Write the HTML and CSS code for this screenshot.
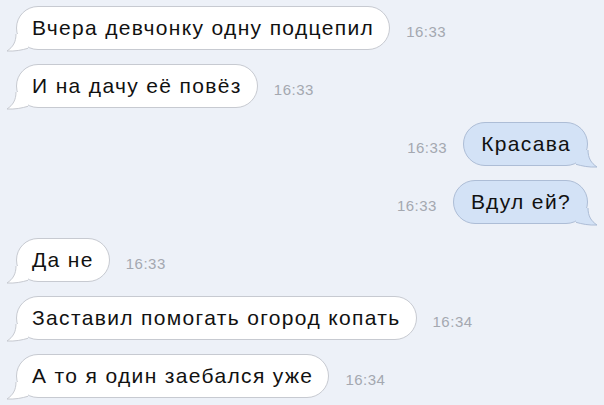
FILE: index.html
```html
<!DOCTYPE html>
<html lang="ru">
<head>
<meta charset="utf-8">
<title>Chat</title>
<link rel="stylesheet" href="styles.css">
</head>
<body>
<div class="chat">
  <div class="msg in">
    <div class="bubble">Вчера девчонку одну подцепил<svg class="tail" viewBox="0 0 26 18" width="26" height="18"><path class="tf" d="M10 0 C10 8 7 13 1 17 C9 17.5 16 16 22 14.3 L22 0 Z"/><path class="ts" d="M10 0 C10 8 7 13 1 17 C9 17.5 16 16 22 14.3"/></svg></div>
    <span class="time">16:33</span>
  </div>
  <div class="msg in">
    <div class="bubble">И на дачу её повёз<svg class="tail" viewBox="0 0 26 18" width="26" height="18"><path class="tf" d="M10 0 C10 8 7 13 1 17 C9 17.5 16 16 22 14.3 L22 0 Z"/><path class="ts" d="M10 0 C10 8 7 13 1 17 C9 17.5 16 16 22 14.3"/></svg></div>
    <span class="time">16:33</span>
  </div>
  <div class="msg out">
    <span class="time">16:33</span>
    <div class="bubble">Красава<svg class="tail" viewBox="0 0 26 18" width="26" height="18"><path class="tf" d="M10 0 C10 8 7 13 1 17 C9 17.5 16 16 22 14.3 L22 0 Z"/><path class="ts" d="M10 0 C10 8 7 13 1 17 C9 17.5 16 16 22 14.3"/></svg></div>
  </div>
  <div class="msg out">
    <span class="time">16:33</span>
    <div class="bubble">Вдул ей?<svg class="tail" viewBox="0 0 26 18" width="26" height="18"><path class="tf" d="M10 0 C10 8 7 13 1 17 C9 17.5 16 16 22 14.3 L22 0 Z"/><path class="ts" d="M10 0 C10 8 7 13 1 17 C9 17.5 16 16 22 14.3"/></svg></div>
  </div>
  <div class="msg in">
    <div class="bubble">Да не<svg class="tail" viewBox="0 0 26 18" width="26" height="18"><path class="tf" d="M10 0 C10 8 7 13 1 17 C9 17.5 16 16 22 14.3 L22 0 Z"/><path class="ts" d="M10 0 C10 8 7 13 1 17 C9 17.5 16 16 22 14.3"/></svg></div>
    <span class="time">16:33</span>
  </div>
  <div class="msg in">
    <div class="bubble">Заставил помогать огород копать<svg class="tail" viewBox="0 0 26 18" width="26" height="18"><path class="tf" d="M10 0 C10 8 7 13 1 17 C9 17.5 16 16 22 14.3 L22 0 Z"/><path class="ts" d="M10 0 C10 8 7 13 1 17 C9 17.5 16 16 22 14.3"/></svg></div>
    <span class="time">16:34</span>
  </div>
  <div class="msg in">
    <div class="bubble">А то я один заебался уже<svg class="tail" viewBox="0 0 26 18" width="26" height="18"><path class="tf" d="M10 0 C10 8 7 13 1 17 C9 17.5 16 16 22 14.3 L22 0 Z"/><path class="ts" d="M10 0 C10 8 7 13 1 17 C9 17.5 16 16 22 14.3"/></svg></div>
    <span class="time">16:34</span>
  </div>
</div>
</body>
</html>
```
FILE: styles.css
```css
html, body {
  margin: 0;
  padding: 0;
}
body {
  background: #edf1f8;
  width: 604px;
  height: 405px;
  overflow: hidden;
  font-family: "Liberation Sans", Arial, sans-serif;
}
.chat {
  display: flex;
  flex-direction: column;
  gap: 14px;
  padding: 6px 16px 0 16px;
}
.msg {
  display: flex;
  align-items: center;
  gap: 16px;
}
.msg.out {
  justify-content: flex-end;
}
.bubble {
  position: relative;
  height: 44px;
  box-sizing: border-box;
  display: flex;
  align-items: center;
  padding: 0 15px 0 15px;
  border-radius: 22px;
  font-size: 21px;
  letter-spacing: 1.35px;
  color: #111;
  background: #ffffff;
  border: 1px solid #c7cad1;
}
.msg.out .bubble {
  background: #d3e2f6;
  border-color: #adbdd6;
  padding: 0 16px 0 17px;
}
.tail {
  position: absolute;
  left: -11px;
  bottom: -3px;
  overflow: visible;
}
.msg.out .tail {
  left: auto;
  right: -11px;
  transform: scaleX(-1);
}
.tf {
  fill: #ffffff;
}
.ts {
  fill: none;
  stroke: #c7cad1;
  stroke-width: 1;
}
.msg.out .tf {
  fill: #d3e2f6;
}
.msg.out .ts {
  stroke: #adbdd6;
}
.time {
  margin-top: 6px;
  font-size: 15px;
  letter-spacing: 0.5px;
  color: #a4a8b0;
}
```
